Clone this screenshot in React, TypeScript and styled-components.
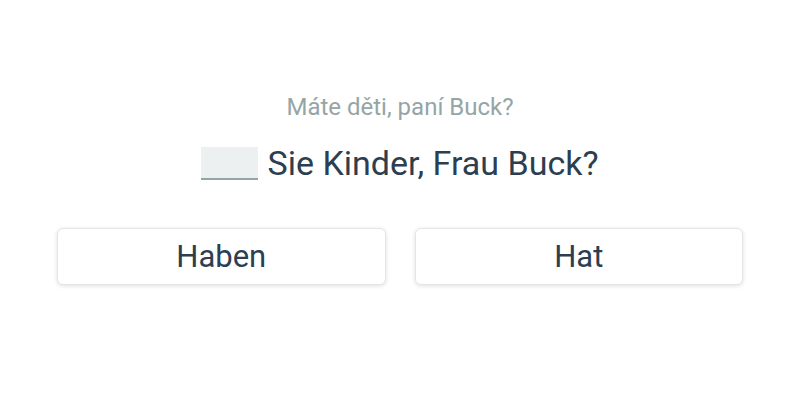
import React from "react";
import styled, { createGlobalStyle } from "styled-components";

const Global = createGlobalStyle`
  html, body { margin: 0; padding: 0; background: #ffffff; }
  body { font-family: Roboto, "Noto Sans", sans-serif; }
`;

const Page = styled.div`
  width: 800px;
  height: 400px;
  box-sizing: border-box;
  padding: 91px 57px 0;
  display: flex;
  flex-direction: column;
  align-items: center;
`;

const Translation = styled.div`
  font-size: 24px;
  line-height: 32px;
  color: #95a5a6;
`;

const Sentence = styled.div`
  margin-top: 20px;
  display: flex;
  align-items: center;
  font-size: 34px;
  line-height: 40px;
  color: #2c3e50;
`;

const Blank = styled.span`
  display: inline-block;
  width: 57px;
  height: 31px;
  background: #ecf0f1;
  border-bottom: 2px solid #95a5a6;
  margin-right: 9px;
`;

const Options = styled.div`
  margin-top: 45px;
  width: 100%;
  display: grid;
  grid-template-columns: 1fr 1fr;
  gap: 29px;
`;

const Option = styled.button`
  height: 57px;
  box-sizing: border-box;
  background: #ffffff;
  border: 1px solid #e3e6e8;
  border-radius: 6px;
  box-shadow: 0 1px 4px rgba(0, 0, 0, 0.13);
  font-family: Roboto, "Noto Sans", sans-serif;
  font-size: 31px;
  color: #2c3e50;
  cursor: pointer;
  padding: 0;
`;

export default function App() {
  return (
    <>
      <Global />
      <Page>
        <Translation>Máte děti, paní Buck?</Translation>
        <Sentence>
          <Blank />
          Sie Kinder, Frau Buck?
        </Sentence>
        <Options>
          <Option>Haben</Option>
          <Option>Hat</Option>
        </Options>
      </Page>
    </>
  );
}
